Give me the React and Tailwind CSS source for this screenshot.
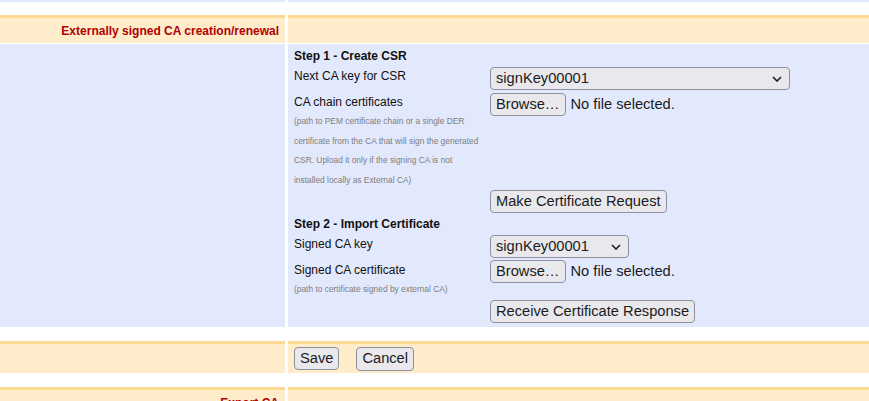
import React from 'react'

const btn =
  "h-[23px] px-[5px] bg-[#e9e9ed] border border-[#8f8f9d] rounded-[4px] text-[14.67px] leading-none text-[#1b1b1b] flex items-center"

function Chevron() {
  return (
    <svg width="10" height="6" viewBox="0 0 10 6" className="shrink-0">
      <path d="M1 1 L5 5 L9 1" fill="none" stroke="#1b1b1b" strokeWidth="1.6" />
    </svg>
  )
}

function Select({ width }) {
  return (
    <div className={`${btn} justify-between pr-[7px] ${width}`}>
      <span>signKey00001</span>
      <Chevron />
    </div>
  )
}

function FileInput() {
  return (
    <div className="flex items-center gap-[5px] h-[22px]">
      <button className={`${btn} h-[22px]`}>Browse…</button>
      <span className="text-[14.67px] text-[#1b1b1b]">No file selected.</span>
    </div>
  )
}

function Help({ lines }) {
  return (
    <div className="text-[8.4px] leading-[19.5px] text-[#7d7d7d]">
      {lines.map((l) => (
        <div key={l} className="whitespace-nowrap">{l}</div>
      ))}
    </div>
  )
}

function App() {
  return (
    <div className="w-[869px] h-[401px] overflow-hidden bg-white font-['Liberation_Sans',Arial,sans-serif] text-[12px] text-[#111]">
      <div className="grid grid-cols-[285px_1fr] gap-x-[3px] h-[2px]">
        <div className="bg-[#e3e9fc]" />
        <div className="bg-[#e3e9fc]" />
      </div>

      {/* header row */}
      <div className="grid grid-cols-[285px_1fr] gap-x-[3px] mt-[13px]">
        <div className="h-[28px] border-t-[3px] border-[#fcd993] bg-[#feeccb] flex items-center justify-end pr-[6px] font-bold text-[#b30000]">
          Externally signed CA creation/renewal
        </div>
        <div className="h-[28px] border-t-[3px] border-[#fcd993] bg-[#feeccb]" />
      </div>

      {/* form row */}
      <div className="grid grid-cols-[285px_1fr] gap-x-[3px] mt-px">
        <div className="bg-[#e3e9fc]" />
        <div className="bg-[#e3e9fc] pl-[6px] pt-[2px] pb-[4px]">
          <div className="grid grid-cols-[196px_1fr]">
            <div className="col-span-2 h-[20px] leading-[20px] font-bold">Step 1 - Create CSR</div>

            <div className="leading-[20px]">Next CA key for CSR</div>
            <div className="pt-px">
              <Select width="w-[300px]" />
            </div>

            <div className="mt-[2px]">
              <div className="leading-[20px]">CA chain certificates</div>
              <Help
                lines={[
                  "(path to PEM certificate chain or a single DER",
                  "certificate from the CA that will sign the generated",
                  "CSR. Upload it only if the signing CA is not",
                  "installed locally as External CA)",
                ]}
              />
            </div>
            <div className="mt-[3px]">
              <FileInput />
            </div>

            <div />
            <div className="flex">
              <button className={btn}>Make Certificate Request</button>
            </div>

            <div className="col-span-2 mt-px h-[20px] leading-[20px] font-bold">Step 2 - Import Certificate</div>

            <div className="leading-[20px]">Signed CA key</div>
            <div className="pt-px">
              <Select width="w-[139px]" />
            </div>

            <div className="mt-[2px]">
              <div className="leading-[20px]">Signed CA certificate</div>
              <Help lines={["(path to certificate signed by external CA)"]} />
            </div>
            <div className="mt-[2px]">
              <FileInput />
            </div>

            <div />
            <div className="flex mt-[0.5px]">
              <button className={btn}>Receive Certificate Response</button>
            </div>
          </div>
        </div>
      </div>

      {/* save row */}
      <div className="grid grid-cols-[285px_1fr] gap-x-[3px] mt-[14px]">
        <div className="h-[32px] border-t-[3px] border-[#fcd993] bg-[#feeccb]" />
        <div className="h-[32px] border-t-[3px] border-[#fcd993] bg-[#feeccb] flex items-center pl-[6px] gap-[17px]">
          <button className={btn}>Save</button>
          <button className={`${btn} h-[24px]`}>Cancel</button>
        </div>
      </div>

      {/* export row */}
      <div className="grid grid-cols-[285px_1fr] gap-x-[3px] mt-[14px]">
        <div className="h-[28px] border-t-[3px] border-[#fcd993] bg-[#feeccb] flex items-center justify-end pr-[6px] font-bold text-[#b30000]">
          Export CA
        </div>
        <div className="h-[28px] border-t-[3px] border-[#fcd993] bg-[#feeccb]" />
      </div>
    </div>
  )
}

export default App
